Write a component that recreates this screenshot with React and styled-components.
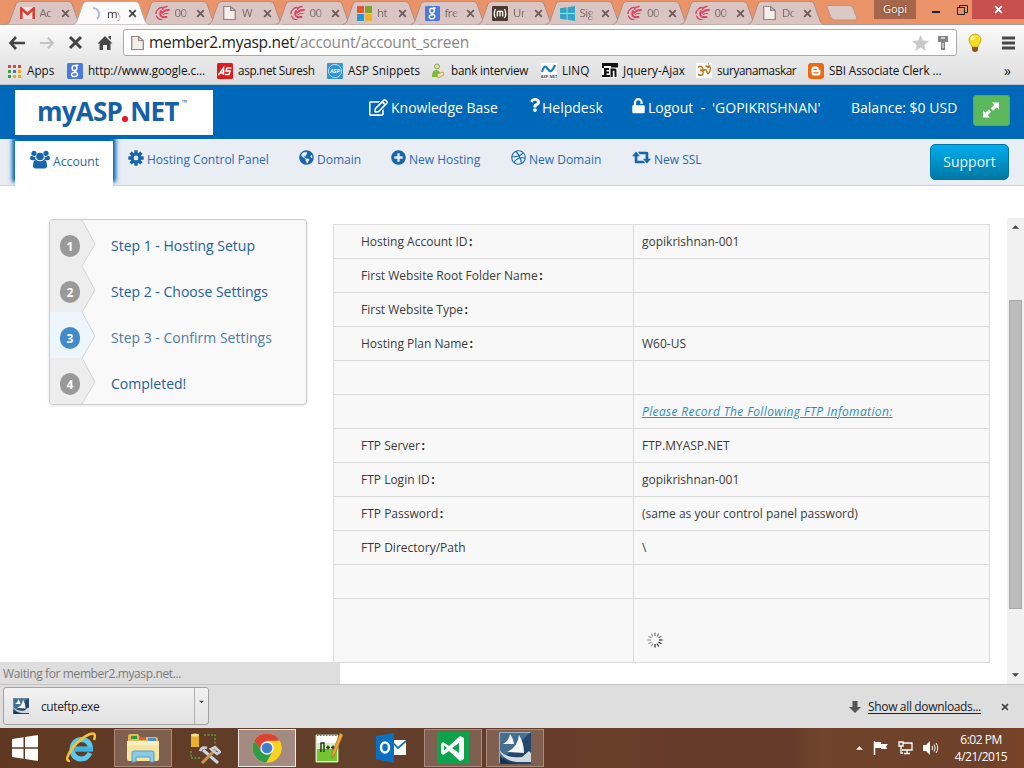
import React from 'react';
import styled, { createGlobalStyle } from 'styled-components';
import { FaGlobeAmericas, FaPlusCircle, FaDribbble, FaRegEdit, FaQuestion } from 'react-icons/fa';

const Global = createGlobalStyle`
  * { box-sizing: border-box; }
  body { margin: 0; background: #fff; overflow: hidden; font-family: "Open Sans", "Noto Sans", sans-serif; }
  svg { display: block; flex: none; }
`;

const Screen = styled.div`
  width: 1024px; height: 768px; display: flex; flex-direction: column; overflow: hidden;
`;
const Text = styled.span`
  display: block; flex: none; white-space: nowrap; line-height: 1.3;
  font-size: ${p => p.$size || 12}px;
  letter-spacing: ${p => p.$ls || 0}px;
  width: ${p => (p.$w ? p.$w + 'px' : 'auto')};
  color: ${p => p.$color || 'inherit'};
`;

/* Tab strip */
const TabStrip = styled.div`
  height: 25px; flex: none; background: #ea9369; border-bottom: 1px solid #a59b97;
  display: flex; align-items: flex-start; padding-left: 5.5px;
`;
const Tab = styled.div`
  position: relative; z-index: ${p => (p.$active ? 3 : 1)};
  width: 75.5px; height: ${p => (p.$active ? 25 : 24)}px; margin-right: -8px; flex: none;
  display: flex; align-items: center; padding: 2px 0 0 14px;
`;
const TabShape = styled.svg`
  position: absolute; left: 0; top: 0; z-index: -1;
`;
const TabTitle = styled.span`
  width: 14px; margin: 0 7px 0 5px; font-size: 11.5px; line-height: 18px; color: ${p => (p.$active ? '#333' : '#77696a')};
  overflow: hidden; white-space: nowrap; letter-spacing: -0.5px;
  mask-image: linear-gradient(90deg, #000 65%, transparent);
`;
const NewTab = styled.svg` margin: 5px 0 0 10px; `;
const WindowControls = styled.div`
  margin-left: auto; display: flex; align-items: flex-start; height: 24px;
`;
const UserBadge = styled.div`
  width: 42px; height: 19px; background: #a5664b; color: #fff; font-size: 11px; line-height: 18px; text-align: center;
  text-shadow: 0 0 2px #5a3222; margin-right: 3px;
`;
const CaptionButton = styled.div`
  width: ${p => p.$w}px; height: 19px; display: flex; align-items: center; justify-content: center;
  background: ${p => (p.$close ? '#c8504f' : 'transparent')};
`;

/* Toolbar */
const Toolbar = styled.div`
  height: 33px; flex: none; display: flex; align-items: center; padding: 2px 9px 0 8px;
  background: linear-gradient(#fafafa, #e9e9e9);
`;
const NavGlyph = styled.div` width: ${p => p.$w}px; flex: none; `;
const Omnibox = styled.div`
  width: 834px; height: 27px; border: 1px solid #aaa; border-radius: 3px; background: #fff;
  display: flex; align-items: center; padding: 0 6px 0 6px; color: #888; margin-right: 11px;
  b { font-weight: 400; color: #222; }
`;
const UrlText = styled(Text)` margin-left: 4px; `;
const OmniActions = styled.svg` margin-left: auto; `;
const MenuIcon = styled.svg` margin-left: auto; `;
const Bookmarks = styled.div`
  height: 27px; flex: none; background: linear-gradient(#e9e9e9, #dedede); border-bottom: 1px solid #b6bfc9;
  display: flex; align-items: center; padding-left: 7px; color: #111;
`;
const Bookmark = styled.div`
  width: ${p => p.$w}px; flex: none; display: flex; align-items: center; gap: 5px;
`;

/* Site header */
const Header = styled.header`
  height: 54px; flex: none; background: #0068b8; color: #fff; display: flex; align-items: flex-start; padding: 5px 0 0 15px;
`;
const Logo = styled.div`
  width: 198px; height: 45px; background: #fff; color: #1660a9; padding-left: 22px; margin-right: 156px; flex: none;
  display: flex; align-items: flex-start; font: 700 26px/43px "Open Sans", sans-serif; letter-spacing: -0.75px;
  sup { font-size: 7px; line-height: 26px; letter-spacing: 0; margin-left: 3px; font-weight: 600; }
`;
const LogoDot = styled.i`
  width: 6px; height: 6px; border-radius: 50%; background: #e8132c; margin: 26px 2px 0 0;
`;
const HeaderLink = styled.div`
  width: ${p => p.$w}px; flex: none; display: flex; align-items: flex-start; gap: ${p => p.$gap ?? 3}px; padding-top: 8px;
  ${Text} { margin-top: 1px; }
`;
const ExpandButton = styled.div`
  width: 37px; height: 31px; margin-top: 5px; border-radius: 3px; background: #5cb85c; border: 1px solid #4cae4c;
  display: flex; align-items: center; justify-content: center; padding: 0 2px 2px 0;
`;
const Nav = styled.nav`
  height: 47px; flex: none; background: #e9edf4; border-bottom: 1px solid #c9d2df; color: #1766a9;
  display: flex; align-items: flex-start; padding-left: 15px;
`;
const ActiveNav = styled.div`
  width: 98px; height: 45px; margin: 2px 15px 0 0; background: #fff; display: flex; align-items: flex-start; padding: 9px 0 0 15px; gap: 3px;
  box-shadow: -3px -4px 4px 0 #0068b8, 3px -4px 4px 0 #0068b8; color: #1766a9; clip-path: inset(-2px -8px 0 -8px);
  ${Text} { margin-top: 4px; color: #2a6aa8; }
`;
const NavItem = styled.div`
  width: ${p => p.$w}px; flex: none; display: flex; align-items: flex-start; gap: 3px; padding-top: 11px;
  ${Text} { margin-top: 1.5px; color: #2a6aa8; }
`;
const Support = styled.div`
  width: 79px; height: 36px; margin: 5px 15px 0 auto; border: 1px solid #0076a3; border-radius: 5px;
  background: linear-gradient(#00adee, #0078a5); color: #e6f7ff; font-size: 14px; line-height: 34px; text-align: center;
`;

/* Page body */
const Body = styled.main`
  height: 498px; flex: none; background: #fff; display: flex; align-items: flex-start; padding-left: 49px; overflow: hidden;
`;
const Sidebar = styled.div` width: 284px; flex: none; height: 498px; display: flex; flex-direction: column; justify-content: space-between; `;
const Steps = styled.div`
  width: 258px; height: 186px; margin-top: 33px; border: 1px solid #ccc; border-radius: 4px; background: #f9f9f9;
  box-shadow: 0 1px 3px rgba(0,0,0,.1); overflow: hidden;
`;
const Step = styled.div`
  height: 46px; display: flex; align-items: center; color: ${p => (p.$active ? '#4f7ca5' : '#22609c')};
  ${Text} { margin-top: 6px; }
`;
const StepMark = styled.div`
  width: 61px; height: 46px; position: relative; display: flex; align-items: center; padding-left: 10px; z-index: 0;
  > svg { position: absolute; left: 0; top: 0; z-index: -1; }
`;
const StepNumber = styled.span`
  width: 20px; height: 22px; margin-top: 6px; border-radius: 10px; color: #fff; background: ${p => (p.$active ? '#428bca' : '#999')};
  font: 700 12px/23px "Open Sans", sans-serif; text-align: center;
`;
const StatusBubble = styled.div`
  width: 340px; height: 22px; margin-left: -49px; background: #dedede; color: #7a7a7a; padding: 4px 0 0 3px;
  border-top-right-radius: 3px; position: relative;
`;
const Details = styled.div`
  width: 657px; margin-top: 38px; border: 1px solid #ddd; border-bottom: 0; background: #f8f8f8; color: #3a3a3a; flex: none;
`;
const DetailRow = styled.div`
  height: ${p => p.$h || 34}px; display: flex; border-bottom: 1px solid #d9d9d9;
`;
const LabelCell = styled.div`
  width: 300px; border-right: 1px solid #d9d9d9; padding: 9px 0 0 27px;
  b { font-weight: 700; margin-left: 1.5px; color: #222; }
`;
const ValueCell = styled.div`
  flex: 1; padding: ${p => (p.$loader ? '33px 0 0 13px' : '9px 0 0 8px')};
  em { color: #2d8fb3; text-decoration: underline; letter-spacing: 0.36px; }
`;
const Scrollbar = styled.div`
  width: 17px; height: 466px; margin: 32px 0 0 auto; background: #f1f1f1; display: flex; flex-direction: column;
  align-items: center; justify-content: space-between; padding: 7px 0;
`;
const Thumb = styled.div`
  width: 13px; height: 309px; position: relative; top: 3px; background: #bcbcbc; border: 1px solid #a8a8a8;
`;

/* Downloads */
const Downloads = styled.div`
  height: 44px; flex: none; background: #dedede; border-top: 1px solid #c3c3c3; display: flex; align-items: flex-start; padding: 2px 15px 0 3px; color: #222;
`;
const DownloadItem = styled.div`
  width: 206px; height: 38px; border: 1px solid #a2a2a2; border-radius: 3px; background: linear-gradient(#f2f2f2, #e2e2e2);
  display: flex; align-items: center; padding-left: 9px; gap: 12px;
  ${Text} { margin-top: 2px; }
`;
const DropArrow = styled.div`
  width: 14px; height: 36px; margin-left: auto; border-left: 1px solid #b0b0b0; padding: 12px 0 0 4px;
`;
const DownloadLinks = styled.div`
  margin-left: auto; height: 39px; display: flex; align-items: center; gap: 7px;
  u { text-underline-offset: 2px; }
  ${Text} { margin-right: 13px; }
`;

/* Taskbar */
const Taskbar = styled.div`
  height: 40px; flex: none; display: flex; align-items: center; color: #fff; gap: 4px;
  background: linear-gradient(90deg, #603822 0, #62402a 35%, #653b2a 50%, #693f29 60%, #643a29 68%, #643b2a 77%, #70442b 80%, #6d412a 95%, #784429 100%);
`;
const TaskButton = styled.div`
  width: 58px; height: 38px; flex: none; display: flex; align-items: center; justify-content: center;
  border: 1px solid ${p => (p.$front ? '#f3e8e3' : p.$open ? '#a78b7d' : 'transparent')};
  background: ${p => (p.$front ? '#a48b81' : p.$open ? '#7e5f50' : 'transparent')};
`;
const StartButton = styled.div` width: 48px; padding-left: 12px; flex: none; `;
const Tray = styled.div` margin-left: auto; display: flex; align-items: center; gap: 10px; `;
const Clock = styled.div`
  width: 62px; margin-left: 1px; margin-right: 12px; text-align: center; font-size: 12px; line-height: 17px; letter-spacing: -0.5px; white-space: nowrap;
`;

const Close = ({ c = '#6c5c5b', s = 9 }) => (
  <svg width={s} height={s} viewBox="0 0 9 9"><path d="M1.2 1.2l6.6 6.6M7.8 1.2L1.2 7.8" stroke={c} strokeWidth="1.8" /></svg>
);
const PageIcon = ({ w = 15 }) => (
  <svg width={w} height="16" viewBox="1 0 13 16" preserveAspectRatio="none"><path d="M2.5 1.5h6l4 4v9h-10zM8.5 1.5v4h4" fill="#f5eeec" stroke="#8d8582" strokeWidth="1.1" /></svg>
);
const Swirl = () => (
  <svg width="15" height="16" viewBox="0 0 15 16" fill="none" stroke="#d34560" strokeLinecap="round">
    <path d="M1 8.500Q1 6 2.500 5M3.500 4Q5 2.200 7 2.500M7.500 4Q9 1.500 12 1.500" strokeWidth="1.500" />
    <path d="M7 8Q9 5 14 5" strokeWidth="1.800" /><path d="M8 9.500Q11 7.500 13 8.500" strokeWidth="1" />
    <path d="M6 6Q3.500 10.500 8 12.300L11.500 12" strokeWidth="1.900" />
    <path d="M1.500 11Q3 14.800 7 14.500" strokeWidth="1.200" />
  </svg>
);
const Gmail = () => (
  <svg width="15" height="12" viewBox="0 0 15 12"><path d="M0 0h15v12H0z" fill="#f3dedb" /><path d="M1.300 12V1.500L7.500 7l6.200-5.500V12" fill="none" stroke="#cf4338" strokeWidth="2.6" /></svg>
);
const GoogleG = ({ s = 16 }) => (
  <svg width={s} height={s} viewBox="0 0 16 16"><rect width="16" height="16" rx="1.5" fill="#4a7ae0" />
    <g fill="none" stroke="#fff" strokeWidth="1.5"><ellipse cx="7.500" cy="5" rx="2.400" ry="2.600" /><path d="M8.500 2.200h3M8 7.600c-1.500 1 2.500 1.500 2.500 3.700 0 3-6 3-6 .3 0-1.800 2-2.200 4-2.200" /></g></svg>
);
const MsLogo = () => (
  <svg width="15" height="15" viewBox="0 0 15 15"><path d="M0 0h7v7H0z" fill="#e4572c" /><path d="M8 0h7v7H8z" fill="#7da62b" /><path d="M0 8h7v7H0z" fill="#2899cf" /><path d="M8 8h7v7H8z" fill="#efb02e" /></svg>
);
const BoxM = () => (
  <svg width="16" height="15" viewBox="0 0 16 15"><rect width="16" height="15" rx="1" fill="#4c3a31" /><path d="M3.500 3q-2.500 4.500 0 9M12.500 3q2.500 4.500 0 9M5.300 10.500V6q1.300-1.600 2.700 0v4.500M8 6q1.300-1.600 2.700 0v4.500" fill="none" stroke="#fff" strokeWidth="1.300" /></svg>
);
const Windows = ({ s = 15, c = '#2fa6c8' }) => (
  <svg width={s} height={s} viewBox="0 0 26 26" fill={c}><path d="M0 4l11.500-1.700v10H0zM13 2l13-2v12.300H13zM0 13.700h11.500v10L0 22zM13 13.700h13V26l-13-2z" /></svg>
);
const Spinner = () => (
  <svg width="15" height="16" viewBox="0 0 15 16"><path d="M6 2.200a6 6 0 0 1 4 10.500" fill="none" stroke="#a9b8cd" strokeWidth="1.800" /></svg>
);
const Installer = ({ s = 16 }) => (
  <svg width={s} height={s} viewBox="0 0 32 32"><rect width="32" height="32" fill="#22476b" /><path d="M0 0h32L0 30z" fill="#5f88a8" opacity=".6" />
    <path d="M4 12q6-3 7-10 3 4 4 10zM8 20Q19 15 20 3q5 8 5 18z" fill="#f4f6f8" /><path d="M0 18Q8 27 23 25l7-6 2 2v9H18Q5 29 0 18z" fill="#d3dade" /><path d="M0 22v10h20Q5 31 0 22z" fill="#183652" /><path d="M.5 31.500V.5h31" fill="none" stroke="#9fb3c2" /></svg>
);
const Cog = () => (
  <svg width="16" height="16" viewBox="-8 -8 16 16" fill="#1766a9">
    {[0, 45, 90, 135].map(a => <rect key={a} x="-1.700" y="-7.700" width="3.400" height="15.400" rx=".5" transform={`rotate(${a})`} />)}
    <circle r="5.600" /><circle r="2.400" fill="#e9edf4" />
  </svg>
);
const Users = () => (
  <svg width="20" height="19" viewBox="0 0 20 19" fill="#1766a9">
    <circle cx="4" cy="3.300" r="2.600" /><circle cx="16" cy="3.300" r="2.600" />
    <path d="M1.500 5.800q2.500 1.500 4 .7-.8 2 .6 3.700H2Q0 10 0 8.200 0 6 1.500 5.800zM18.500 5.800q-2.500 1.500-4 .7.8 2-.6 3.700H18q2-.2 2-2 0-2.200-1.500-2.400z" />
    <circle cx="10" cy="6.500" r="3.800" />
    <path d="M6 9.800q4 3 8 0 3 .7 3 6 0 2.700-2.800 2.700H5.800Q3 18.500 3 15.800q0-5.300 3-6z" />
  </svg>
);
const Retweet = () => (
  <svg width="19" height="15" viewBox="0 0 19 15" fill="#1766a9">
    <path d="M4 1.500L8 6.300H5.400v4.500h5.800l2 2.500H4q-1.300 0-1.300-1.300V6.300H0zM15 13.500l-4-4.800h2.600V4.200H7.800l-2-2.500H15q1.300 0 1.300 1.300v5.700H19z" />
  </svg>
);
const Unlock = () => (
  <svg width="13" height="16" viewBox="0 0 13 16"><rect x=".3" y="7.200" width="12.400" height="8" rx="1" fill="#fff" /><path d="M3 8V4.500a3.300 3.300 0 0 1 6.600 0V6" fill="none" stroke="#fff" strokeWidth="2.200" /></svg>
);
const Expand = () => (
  <svg width="18" height="18" viewBox="0 0 18 18" fill="#fff"><path d="M10 1.500H17V8.500l-2.300-2.300-3.600 3.600-2.400-2.400 3.600-3.600zM8 16.500H1V9.500l2.300 2.300 3.400-3.400 2.400 2.400-3.400 3.400z" /></svg>
);
const Triangle = ({ up, c = '#444', w = 7 }) => (
  <svg width={w} height="4" viewBox="0 0 8 4"><path d={up ? 'M0 4l4-4 4 4z' : 'M0 0h8L4 4z'} fill={c} /></svg>
);
const LoaderDots = () => (
  <svg width="16" height="16" viewBox="-8 -8 16 16">
    {Array.from({ length: 12 }, (_, i) => <path key={i} d="M0-4v-3.500" stroke={i > 2 && i < 7 ? '#222' : i > 6 ? '#999' : '#777'} strokeWidth="1.200" transform={`rotate(${i * 30})`} />)}
  </svg>
);

/* Bookmark icons */
const AppsIcon = () => {
  const c = ['#d5493e', '#d5493e', '#d5493e', '#3a9a55', '#4674c9', '#e5ad22', '#3a9a55', '#e5ad22', '#e5ad22'];
  return <svg width="15" height="14" viewBox="0 0 15 14">{c.map((f, i) => <rect key={i} x={1 + (i % 3) * 5} y={1 + Math.floor(i / 3) * 5} width="3" height="3" fill={f} />)}</svg>;
};
const AsIcon = () => (
  <svg width="16" height="16" viewBox="0 0 16 16"><rect width="16" height="16" rx="1.500" fill="#df1c1c" /><path d="M1.500 12l5-7v7M3.500 10h3M14.500 5h-4.500l-1 3h4l-1 3.500H8" fill="none" stroke="#fff" strokeWidth="1.600" /></svg>
);
const AspIcon = () => (
  <svg width="16" height="16" viewBox="0 0 16 16"><rect width="16" height="16" rx="1" fill="#3494d8" /><circle cx="8" cy="8" r="6.600" fill="none" stroke="#b9def5" /><text x="8" y="10.200" textAnchor="middle" fontSize="5.500" fontWeight="700" fontStyle="italic" fill="#fff" fontFamily="Open Sans">ASP</text></svg>
);
const PersonIcon = () => (
  <svg width="15" height="16" viewBox="0 0 15 16"><circle cx="6" cy="3.500" r="2.500" fill="#e9dfb2" stroke="#8aa856" /><path d="M1 13q0-6 4-6 3 0 4 3l-3 4H1z" fill="#7dbb3b" /><path d="M6 11l6-2 1 3-6 3z" fill="#eee2ad" stroke="#bd9446" strokeWidth=".8" /></svg>
);
const AspNetIcon = () => (
  <svg width="16" height="16" viewBox="0 0 16 16"><rect width="16" height="16" fill="#fff" /><path d="M1 9q2-8 5-4t4 3q2-1 4-6" fill="none" stroke="#1d7db5" strokeWidth="2.200" /><text x="8" y="14.500" textAnchor="middle" fontSize="4" fontWeight="700" fill="#444" fontFamily="Open Sans">ASP.NET</text></svg>
);
const EnIcon = () => (
  <svg width="16" height="15" viewBox="0 0 16 15"><path d="M0 0h16v15H0z" fill="#fff" /><path d="M0 0h16v4.500H9V3H2v2H0zM2 5h5v2H4.500v1.500H7v2H4.500V12H8v2H0v-2h2zM8.500 5.500H13q1.500 0 1.500 2V14h-2V7.800h-1.700V14H8.500z" fill="#111" /></svg>
);
const OmIcon = () => (
  <svg width="16" height="15" viewBox="0 0 16 15"><path d="M0 0h16v15H0z" fill="#fff" /><path d="M2 4.500q3-2.500 4.500 0T4 7.500q4 0 3 3t-5 1M7 8q3-3 4 1t3-1.500-3-2.500M9.500 2.500q2 2 4.500 0M12 1h.8" fill="none" stroke="#b7741f" strokeWidth="1.400" /></svg>
);
const BloggerIcon = () => (
  <svg width="16" height="16" viewBox="0 0 16 16"><rect width="16" height="16" rx="3" fill="#ea6b16" /><path d="M5.800 3.500h2.700q2.300 0 2.300 2.500.2 1 1.700 1.200v3q0 2.300-2.300 2.300H5.800q-2.300 0-2.300-2.300V5.800q0-2.300 2.300-2.300z" fill="#fff" /><path d="M6 6.300h2.200M6 9.800h4" stroke="#ea6b16" strokeWidth="1.300" strokeLinecap="round" /></svg>
);

/* Taskbar icons */
const IeIcon = () => (
  <svg width="32" height="32" viewBox="0 0 32 32" fill="none"><path d="M25 21q-3 6-9 6-8.500-.5-9-10Q8 8 16 7.500q9.500.5 9.500 9.500H10" stroke="#59c9f2" strokeWidth="5" /><path d="M10 17h17.500" stroke="#3bb2e6" strokeWidth="3.500" /><path d="M5 29Q-1 29 6 18 15 6 25 2q7-2 4 6" stroke="#f6c32c" strokeWidth="2.500" /></svg>
);
const ExplorerIcon = () => (
  <svg width="34" height="30" viewBox="0 0 34 30"><path d="M2 3q0-2 2-2h8l2 3h16q2 0 2 2v20H2z" fill="#e2b954" /><path d="M5 3h6v3H5z" fill="#2f9a4c" /><path d="M13 4h7v3h-7z" fill="#df5b3a" /><path d="M22 5h8v3h-8z" fill="#4b92ca" /><path d="M1 8h32v18q0 2-2 2H3q-2 0-2-2z" fill="#f5e5a0" /><path d="M1 8h32v4H1z" fill="#f9efc0" /><path d="M6 29V20q0-2 2-2h18q2 0 2 2v9h-4v-5H10v5z" fill="#8acbec" stroke="#539bc5" /></svg>
);
const ToolsIcon = () => (
  <svg width="32" height="32" viewBox="0 0 32 32" fill="none"><path d="M2 3h8v12H2z" fill="#e6b02c" /><ellipse cx="6" cy="3" rx="4" ry="1.500" fill="#f8df8a" /><path d="M15 3h11v9M2 19v7h9" stroke="#5b9b3f" strokeWidth="1.500" strokeDasharray="2 1.500" /><path d="M14 18l15 13" stroke="#c9d4dd" strokeWidth="3" /><path d="M27 17L13 31" stroke="#c59556" strokeWidth="3" /><path d="M11 19q2-5 7-3M22 17l4-2 5 5-3 2z" stroke="#c7d4e0" strokeWidth="2.500" /></svg>
);
const ChromeIcon = () => (
  <svg width="30" height="30" viewBox="-15 -15 30 30"><circle r="14.500" fill="#fbd21f" /><path d="M-12.600-7.200A14.500 14.500 0 0 1 12.600-7.200L0-6.500-5.600 3.200z" fill="#dd4132" /><path d="M-12.600-7.200A14.500 14.500 0 0 0-.5 14.500L5.800 3.500-5.600 3.200z" fill="#2f9d48" /><path d="M-.5 14.500A14.500 14.500 0 0 0 12.600-7.200H0L5.800 3.500z" fill="#fbd21f" /><circle r="6.700" fill="#f5f5f5" /><circle r="5.300" fill="#3c80cf" /></svg>
);
const NotepadIcon = () => (
  <svg width="30" height="32" viewBox="0 0 30 32"><path d="M2 3h22v27H2z" fill="#fdfdfd" /><path d="M3 17h20v12H3z" fill="#72c531" /><path d="M3 11h20v6H3z" fill="#d7efba" /><path d="M2 3h22v27H2z" fill="none" stroke="#bcd7a4" /><path d="M3 3h21" stroke="#777" strokeWidth="2" strokeDasharray="1.500 1.500" /><path d="M7 20v-9h3v9M12 15.500h4M14 13.500v4M17 15.500h4M19 13.500v4" fill="none" stroke="#20301a" strokeWidth="1.400" /><path d="M29 3l-8 19-3 4 .2-5L26 1z" fill="#eda63b" stroke="#a66c28" strokeWidth=".7" /></svg>
);
const OutlookIcon = () => (
  <svg width="30" height="32" viewBox="0 0 30 32"><path d="M16 8h14v15H16z" fill="#fff" /><path d="M17 11l5 5 8-7" fill="none" stroke="#0a70c2" strokeWidth="1.700" /><path d="M0 4l18-3v30L0 27z" fill="#0a70c2" /><ellipse cx="9" cy="15.500" rx="4" ry="5" fill="none" stroke="#fff" strokeWidth="2.500" /></svg>
);
const VsIcon = () => (
  <svg width="32" height="32" viewBox="0 0 32 32"><path d="M0 0h32v32H0z" fill="#0da34d" /><path d="M4 12l2-2 6 4 11-10 4 2v21l-4 2-11-10-6 4-2-2zM7 13.500v5l3-2.500zM22 11l-7 5 7 5z" fill="#fff" fillRule="evenodd" /></svg>
);

const tabs = [
  [<Gmail />, 'Ac'], [<Spinner />, 'my', true], [<Swirl />, '00'], [<PageIcon />, 'W'], [<Swirl />, '00'], [<MsLogo />, 'ht'],
  [<GoogleG s={15} />, 'fre'], [<BoxM />, 'Ur'], [<Windows />, 'Sig'], [<Swirl />, '00'], [<Swirl />, '00'], [<PageIcon />, 'Dc'],
];
const bookmarks = [
  [60, <AppsIcon />, 'Apps', 0], [150, <GoogleG />, 'http://www.google.c...', -0.08], [110, <AsIcon />, 'asp.net Suresh', -0.3],
  [104, <AspIcon />, 'ASP Snippets', 0.1], [110, <PersonIcon />, 'bank interview', -0.2], [61, <AspNetIcon />, 'LINQ', 0],
  [94, <EnIcon />, 'Jquery-Ajax', 0.05], [112, <OmIcon />, 'suryanamaskar', -0.35], [196, <BloggerIcon />, 'SBI Associate Clerk ...', -0.1],
];
const navItems = [
  [171, <Cog />, 'Hosting Control Panel'], [92, <FaGlobeAmericas size={15} />, 'Domain'], [120, <FaPlusCircle size={15} />, 'New Hosting'],
  [121, <FaDribbble size={15} />, 'New Domain'], [80, <Retweet />, 'New SSL'],
];
const steps = ['Step 1 - Hosting Setup', 'Step 2 - Choose Settings', 'Step 3 - Confirm Settings', 'Completed!'];
const details = [
  ['Hosting Account ID', 'gopikrishnan-001', true], ['First Website Root Folder Name', '', true], ['First Website Type', '', true],
  ['Hosting Plan Name', 'W60-US', true], ['', ''], ['', <em>Please Record The Following FTP Infomation:</em>],
  ['FTP Server', 'FTP.MYASP.NET', true], ['FTP Login ID', 'gopikrishnan-001', true], ['FTP Password', '(same as your control panel password)', true],
  ['FTP Directory/Path', '\\'], ['', ''],
];

export default function App() {
  return (
    <Screen>
      <Global />
      <TabStrip>
        {tabs.map(([icon, title, active], i) => (
          <Tab key={i} $active={active}>
            <TabShape width="76" height="25" viewBox="0 0 76 25">
              <path d="M0 24.500Q3 24 4 21L10 4Q11 1.500 14 1.500H62Q65 1.500 66 4L72 21Q73 24 76 24.500" fill={active ? '#fafafa' : '#dbc5c2'} stroke={active ? '#b9aaa6' : '#a98b83'} strokeWidth=".9" />
            </TabShape>
            {icon}<TabTitle $active={active}>{title}</TabTitle><Close c={active ? '#444' : undefined} />
          </Tab>
        ))}
        <NewTab width="32" height="16" viewBox="0 0 32 16"><path d="M1 2Q0 .5 3 .5H23Q26 .5 27 3L31 13Q31 15 29 15H9Q6 15 5 12z" fill="#dbc9c6" stroke="#b99589" /></NewTab>
        <WindowControls>
          <UserBadge>Gopi</UserBadge>
          <CaptionButton $w={34}><svg width="8" height="8" viewBox="0 0 8 8"><path d="M0 6h8" stroke="#222" strokeWidth="2" /></svg></CaptionButton>
          <CaptionButton $w={19}><svg width="11" height="10" viewBox="0 0 11 10"><path d="M.5 2.500h7v7h-7zM2.500 2V.500h8v7H8" fill="none" stroke="#222" /></svg></CaptionButton>
          <CaptionButton $w={52} $close><Close c="#fff" /></CaptionButton>
        </WindowControls>
      </TabStrip>
      <Toolbar>
        <NavGlyph $w={31}><svg width="18" height="16" viewBox="0 0 18 16"><path d="M8 2L2.500 8 8 14M3 8h14" fill="none" stroke="#444" strokeWidth="2.600" /></svg></NavGlyph>
        <NavGlyph $w={29}><svg width="16" height="16" viewBox="0 0 18 16"><path d="M10 2l5.500 6L10 14M15 8H1" fill="none" stroke="#c3c3c3" strokeWidth="2.400" /></svg></NavGlyph>
        <NavGlyph $w={29}><Close c="#444" s={15} /></NavGlyph>
        <NavGlyph $w={26}><svg width="16" height="16" viewBox="0 0 16 16"><path d="M8 1l7.500 7.500H13.500V15H10v-5H6v5H2.500V8.500H.5zM11.500 1H14v4l-2.500-2.500z" fill="#484848" /></svg></NavGlyph>
        <Omnibox>
          <PageIcon w={15} />
          <UrlText $size={15.5} $ls={-0.28}><b>member2.myasp.net</b>/account/account_screen</UrlText>
          <OmniActions width="38" height="18" viewBox="0 0 38 18">
            <path d="M8.500 1l2.300 5.500 6.200.4-4.700 4 1.500 6-5.300-3.300L3.200 17l1.500-6L0 7l6.200-.5z" fill="#c9c9c9" />
            <path d="M26 2h10v6h-3v8h-4V8h-3z" fill="#858585" /><path d="M29 4h4" stroke="#fff" strokeWidth="1.200" /><path d="M31 9v5" stroke="#fff" />
          </OmniActions>
        </Omnibox>
        <svg width="14" height="20" viewBox="0 0 14 20"><path d="M7 1a6 6 0 0 1 6 6c0 3-2.500 4-3 7H4C3.500 11 1 10 1 7a6 6 0 0 1 6-6z" fill="#f8de1c" stroke="#b5a01a" strokeWidth=".8" /><circle cx="5" cy="5" r="2" fill="#fffbb4" /><path d="M4 14h6v3.500L8 19H6l-2-1.500z" fill="#8a5a20" /></svg>
        <MenuIcon width="13" height="14" viewBox="0 0 13 14"><path d="M0 2h13M0 7h13M0 12h13" stroke="#484848" strokeWidth="3" /></MenuIcon>
      </Toolbar>
      <Bookmarks>
        {bookmarks.map(([w, icon, t, ls]) => <Bookmark key={t} $w={w}>{icon}<Text $size={11.7} $ls={ls}>{t}</Text></Bookmark>)}
        <Text $size={14}>»</Text>
      </Bookmarks>

      <Header>
        <Logo>myASP<LogoDot />NET<sup>™</sup></Logo>
        <HeaderLink $w={159}><FaRegEdit size={19} /><Text $size={14}>Knowledge Base</Text></HeaderLink>
        <HeaderLink $w={104} $gap={0}><FaQuestion size={14} /><Text $size={14}>Helpdesk</Text></HeaderLink>
        <HeaderLink $w={80}><Unlock /><Text $size={14}>Logout&nbsp; -</Text></HeaderLink>
        <HeaderLink $w={139}><Text $size={14}>'GOPIKRISHNAN'</Text></HeaderLink>
        <HeaderLink $w={122}><Text $size={14}>Balance: $0 USD</Text></HeaderLink>
        <ExpandButton><Expand /></ExpandButton>
      </Header>
      <Nav>
        <ActiveNav><Users /><Text $size={12.2}>Account</Text></ActiveNav>
        {navItems.map(([w, icon, t]) => <NavItem key={t} $w={w}>{icon}<Text $size={12}>{t}</Text></NavItem>)}
        <Support>Support</Support>
      </Nav>

      <Body>
        <Sidebar>
          <Steps>
            {steps.map((s, i) => (
              <Step key={s} $active={i === 2}>
                <StepMark>
                  <svg width="46" height="46" viewBox="0 0 46 46"><path d="M0 0H32L45 24 32 46H0z" fill={i === 2 ? '#edf5fd' : '#ededed'} /><path d="M32 0L45 24 32 46" fill="none" stroke="#d3d3d3" /></svg>
                  <StepNumber $active={i === 2}>{i + 1}</StepNumber>
                </StepMark>
                <Text $size={14}>{s}</Text>
              </Step>
            ))}
          </Steps>
          <StatusBubble><Text $size={12} $ls={-0.38}>Waiting for member2.myasp.net...</Text></StatusBubble>
        </Sidebar>
        <Details>
          {details.map(([label, value, colon], i) => (
            <DetailRow key={i}><LabelCell><Text>{label}{colon && <b>:</b>}</Text></LabelCell><ValueCell><Text>{value}</Text></ValueCell></DetailRow>
          ))}
          <DetailRow $h={64}><LabelCell /><ValueCell $loader><LoaderDots /></ValueCell></DetailRow>
        </Details>
        <Scrollbar><Triangle up /><Thumb /><Triangle /></Scrollbar>
      </Body>

      <Downloads>
        <DownloadItem><Installer /><Text $size={12} $ls={-0.4}>cuteftp.exe</Text><DropArrow><Triangle w={5} /></DropArrow></DownloadItem>
        <DownloadLinks>
          <svg width="12" height="12" viewBox="0 0 12 12"><path d="M3.500 0h5v6H12l-6 6-6-6h3.500z" fill="#555" /></svg>
          <Text $size={12} $ls={-0.34} $w={113}><u>Show all downloads...</u></Text>
          <Close c="#444" s={8} />
        </DownloadLinks>
      </Downloads>
      <Taskbar>
        <StartButton><Windows s={26} c="#fff" /></StartButton>
        <TaskButton><IeIcon /></TaskButton>
        <TaskButton $open><ExplorerIcon /></TaskButton>
        <TaskButton><ToolsIcon /></TaskButton>
        <TaskButton $front><ChromeIcon /></TaskButton>
        <TaskButton><NotepadIcon /></TaskButton>
        <TaskButton><OutlookIcon /></TaskButton>
        <TaskButton $open><VsIcon /></TaskButton>
        <TaskButton $open><Installer s={32} /></TaskButton>
        <Tray>
          <Triangle up c="#fff" />
          <svg width="15" height="16" viewBox="0 0 15 16"><path d="M1.500 1v14" stroke="#fff" strokeWidth="1.500" /><path d="M2 2h6v2h7l-2 2.500 1 2.500H8V8H2z" fill="#fff" /></svg>
          <svg width="15" height="14" viewBox="0 0 15 14" fill="none" stroke="#fff" strokeWidth="1.300"><path d="M5 2h9v7H4M9 9v3M6 12.500h6M1 1h4v4H1zM3 5v7h2" /></svg>
          <svg width="16" height="14" viewBox="0 0 16 14"><path d="M0 4h3l4-4v14l-4-4H0z" fill="#fff" /><path d="M9 5q1 2 0 4M11 3.500q2.500 3.500 0 7M13 2q3.500 5 0 10" fill="none" stroke="#fff" /></svg>
          <Clock>6:02 PM<br />4/21/2015</Clock>
        </Tray>
      </Taskbar>
    </Screen>
  );
}
